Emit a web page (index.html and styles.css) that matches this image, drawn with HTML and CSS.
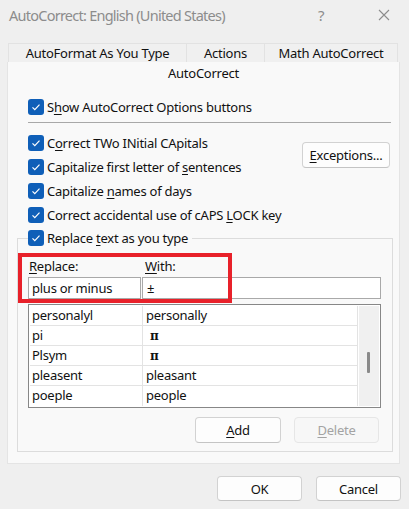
FILE: index.html
```html
<!DOCTYPE html>
<html lang="en">
<head>
  <meta charset="UTF-8" />
  <title>AutoCorrect: English (United States)</title>
  <link rel="stylesheet" href="styles.css">
</head>
<body>
  <div class="window">
    <div class="titlebar">
      <span class="title">AutoCorrect: English (United States)</span>
      <span class="help">?</span>
      <span class="close">
        <svg width="12" height="12" viewBox="0 0 12 12"><path d="M1 1L11 11M11 1L1 11" stroke="#8c8c8c" stroke-width="1.1" fill="none"/></svg>
      </span>
    </div>

    <div class="tab-row">
      <div class="tab tab-format">AutoFormat As You Type</div>
      <div class="tab tab-actions">Actions</div>
      <div class="tab tab-math">Math AutoCorrect</div>
    </div>

    <div class="panel">
      <div class="active-tab">AutoCorrect</div>

      <div class="check show-row">
        <span class="box"><svg width="16" height="16" viewBox="0 0 16 16"><path d="M4.5 8.3l2.3 2.3 4.7-4.9" stroke="#fff" stroke-width="1.2" fill="none"/></svg></span>
        <span>S<u>h</u>ow AutoCorrect Options buttons</span>
      </div>

      <div class="separator"></div>

      <div class="caps-block">
        <div class="checks">
          <div class="check">
            <span class="box"><svg width="16" height="16" viewBox="0 0 16 16"><path d="M4.5 8.3l2.3 2.3 4.7-4.9" stroke="#fff" stroke-width="1.2" fill="none"/></svg></span>
            <span>C<u>o</u>rrect TWo INitial CApitals</span>
          </div>
          <div class="check">
            <span class="box"><svg width="16" height="16" viewBox="0 0 16 16"><path d="M4.5 8.3l2.3 2.3 4.7-4.9" stroke="#fff" stroke-width="1.2" fill="none"/></svg></span>
            <span>Capitalize first letter of <u>s</u>entences</span>
          </div>
          <div class="check">
            <span class="box"><svg width="16" height="16" viewBox="0 0 16 16"><path d="M4.5 8.3l2.3 2.3 4.7-4.9" stroke="#fff" stroke-width="1.2" fill="none"/></svg></span>
            <span>Capitalize <u>n</u>ames of days</span>
          </div>
          <div class="check">
            <span class="box"><svg width="16" height="16" viewBox="0 0 16 16"><path d="M4.5 8.3l2.3 2.3 4.7-4.9" stroke="#fff" stroke-width="1.2" fill="none"/></svg></span>
            <span>Correct accidental use of cAPS <u>L</u>OCK key</span>
          </div>
        </div>
        <button class="btn btn-exceptions"><u>E</u>xceptions...</button>
      </div>

      <fieldset class="group">
        <legend class="check">
          <span class="box"><svg width="16" height="16" viewBox="0 0 16 16"><path d="M4.5 8.3l2.3 2.3 4.7-4.9" stroke="#fff" stroke-width="1.2" fill="none"/></svg></span>
          <span>Replace <u>t</u>ext as you type</span>
        </legend>

        <div class="replace-area">
          <div class="labels">
            <span class="label-replace"><u>R</u>eplace:</span>
            <span class="label-with"><u>W</u>ith:</span>
          </div>
          <div class="inputs">
            <div class="field field-replace">plus or minus</div>
            <div class="field field-with">±</div>
          </div>
          <div class="highlight"></div>
        </div>

        <div class="list">
          <div class="rows">
            <div class="row"><span class="cell c1">personalyl</span><span class="cell c2">personally</span></div>
            <div class="row"><span class="cell c1">pi</span><span class="cell c2"><span class="sym">π</span></span></div>
            <div class="row"><span class="cell c1">Plsym</span><span class="cell c2"><span class="sym">π</span></span></div>
            <div class="row"><span class="cell c1">pleasent</span><span class="cell c2">pleasant</span></div>
            <div class="row"><span class="cell c1">poeple</span><span class="cell c2">people</span></div>
          </div>
          <div class="scrollbar"><div class="thumb"></div></div>
        </div>

        <div class="list-buttons">
          <button class="btn"><u>A</u>dd</button>
          <button class="btn disabled"><u>D</u>elete</button>
        </div>
      </fieldset>
    </div>

    <div class="footer">
      <button class="btn">OK</button>
      <button class="btn">Cancel</button>
    </div>
  </div>
</body>
</html>
```

FILE: styles.css
```css
* {
  box-sizing: border-box;
}

body {
  margin: 0;
  background: #efefef;
  font-family: 'Noto Sans', sans-serif;
  font-size: 13px;
  letter-spacing: -0.25px;
  color: #111;
}

.window {
  width: 409px;
  height: 509px;
}

u {
  text-decoration-thickness: 1px;
  text-underline-offset: 2px;
}

/* title bar */
.titlebar {
  height: 43px;
  display: flex;
  align-items: flex-start;
  padding-left: 9px;
  color: #8c8c8c;
}

.title {
  font-size: 14.5px;
  letter-spacing: -0.75px;
  line-height: 30px;
  width: 309px;
}

.help {
  font-size: 15px;
  line-height: 30px;
  width: 60px;
}

.close {
  height: 30px;
  display: flex;
  align-items: center;
}

/* tabs */
.tab-row {
  display: flex;
  margin-left: 8px;
  height: 19px;
}

.tab {
  border: 1px solid #e2e2e2;
  border-bottom: none;
  border-right: none;
  text-align: center;
  line-height: 19px;
  background: #f0f0f0;
}

.tab-format { width: 178px; }
.tab-actions { width: 78px; }
.tab-math { width: 134px; border-right: 1px solid #e2e2e2; }

.panel {
  margin-left: 7px;
  width: 393px;
  height: 402px;
  background: #f9f9f9;
  border: 1px solid #e4e4e4;
  border-top: none;
  padding: 0 9px 0 20px;
}

.active-tab {
  height: 23px;
  line-height: 23px;
  text-align: center;
  margin: 0 -9px 0 -20px;
}

/* checkboxes */
.check {
  display: flex;
  align-items: center;
  height: 24px;
  white-space: nowrap;
}

.box {
  width: 16px;
  height: 16px;
  border-radius: 3px;
  background: #0f5fb8;
  margin-right: 3px;
  display: flex;
}

.show-row {
  margin-top: 10px;
}

.separator {
  height: 1px;
  background: #a8a8a8;
  margin: 3px -1px 8px 0;
}

.caps-block {
  display: flex;
  justify-content: space-between;
}

.btn {
  font-family: inherit;
  font-size: 13px;
  letter-spacing: inherit;
  color: #111;
  background: #fdfdfd;
  border: 1px solid #d2d2d2;
  border-bottom-color: #c4c4c4;
  border-radius: 4px;
  height: 26px;
  width: 86px;
  padding: 0;
}

.btn-exceptions {
  width: 88px;
  margin-top: 11px;
}

.btn.disabled {
  color: #a3a3a3;
  background: #f7f7f7;
  border-color: #e6e6e6;
}

/* replacement group */
.group {
  margin: -1px -3px 0 -11px;
  padding: 0 11px 8px 10px;
  border: 1px solid #dcdcdc;
  height: 226px;
  min-width: 0;
}

.group legend {
  padding: 0 4px 0 0;
}

.replace-area {
  position: relative;
  margin-top: 6px;
}

.labels {
  display: flex;
  height: 20px;
  line-height: 20px;
}

.label-replace {
  width: 117px;
  padding-left: 1px;
}

.inputs {
  display: flex;
  margin-top: 1px;
  gap: 1px;
}

.field {
  height: 22px;
  line-height: 20px;
  border: 1px solid #a9a9a9;
  background: #fff;
  padding-left: 3px;
}

.field-replace { width: 113px; }
.field-with { flex: 1; padding-left: 4px; }

.highlight {
  position: absolute;
  left: -10px;
  top: -3px;
  width: 214px;
  height: 50px;
  border: 4px solid #e8212a;
}

.list {
  margin-top: 5px;
  height: 104px;
  border: 1px solid #878787;
  padding: 1px;
  display: flex;
  background: #fff;
}

.rows {
  flex: 1;
  border-right: 1px solid #e3e3e3;
}

.row {
  display: flex;
  height: 20px;
  border-bottom: 1px solid #e3e3e3;
  line-height: 19px;
}

.row:last-child {
  border-bottom: none;
}

.cell.c1 {
  width: 113px;
  padding-left: 2px;
  border-right: 1px solid #e3e3e3;
}

.cell.c2 {
  padding-left: 3px;
}

.sym {
  font-family: 'DejaVu Serif', serif;
  font-weight: bold;
  font-size: 12px;
  padding-left: 4px;
}

.scrollbar {
  width: 20px;
  margin-left: 1px;
  background: #f0f0f0;
  position: relative;
}

.thumb {
  position: absolute;
  left: 8px;
  top: 46px;
  width: 3px;
  height: 21px;
  border-radius: 1px;
  background: #8a8a8a;
}

.list-buttons {
  display: flex;
  justify-content: flex-end;
  gap: 13px;
  margin-top: 9px;
  padding-right: 2px;
}

.list-buttons .btn:last-child {
  width: 85px;
}

/* dialog buttons */
.footer {
  display: flex;
  justify-content: flex-end;
  gap: 14px;
  padding-right: 8px;
  margin-top: 12px;
}

.footer .btn {
  width: 85px;
  height: 25px;
}
```
